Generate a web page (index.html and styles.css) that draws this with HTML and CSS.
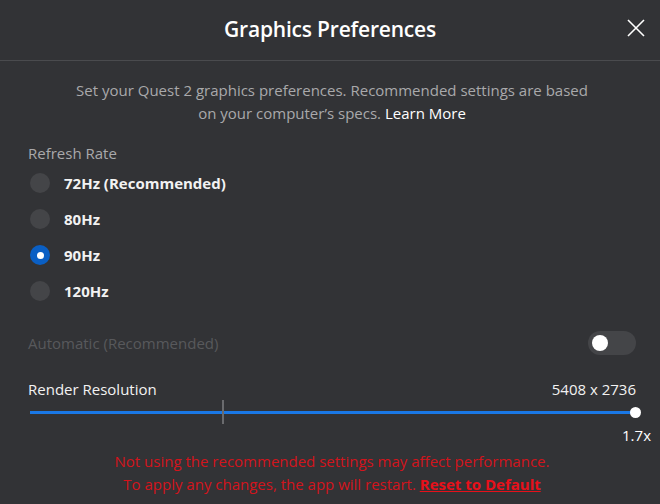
FILE: index.html
```html
<!DOCTYPE html>
<html>
<head>
	<title>Graphics Preferences</title>
	<link rel="stylesheet" href="styles.css">
</head>

<body>
	<div class="dialog">
		<header class="dialog-header">
			<h1>Graphics Preferences</h1>
			<button class="close-btn" aria-label="Close">
				<svg width="18" height="18" viewBox="0 0 18 18">
					<path d="M1 1 L17 17 M17 1 L1 17" stroke="#ffffff" stroke-width="1.6" fill="none"/>
				</svg>
			</button>
		</header>

		<div class="dialog-body">
			<p class="intro">
				Set your Quest 2 graphics preferences. Recommended settings are based<br>
				on your computer’s specs. <a href="#">Learn More</a>
			</p>

			<div class="section-label">Refresh Rate</div>
			<ul class="radio-list">
				<li><span class="radio"></span>72Hz (Recommended)</li>
				<li><span class="radio"></span>80Hz</li>
				<li><span class="radio checked"></span>90Hz</li>
				<li><span class="radio"></span>120Hz</li>
			</ul>

			<div class="toggle-row">
				<span class="toggle-label">Automatic (Recommended)</span>
				<span class="toggle"><span class="knob"></span></span>
			</div>

			<div class="res-row">
				<span>Render Resolution</span>
				<span>5408 x 2736</span>
			</div>
			<div class="slider">
				<div class="track"></div>
				<div class="tick"></div>
				<div class="thumb"></div>
			</div>
			<div class="scale">1.7x</div>

			<p class="warning">
				Not using the recommended settings may affect performance.<br>
				To apply any changes, the app will restart. <a href="#">Reset to Default</a>
			</p>
		</div>
	</div>
</body>

</html>
```

FILE: styles.css
```css
html,
body {
	margin: 0;
	background: #323336;
}

body {
	font-family: "Open Sans", "Noto Sans", sans-serif;
	color: #ffffff;
	width: 660px;
	height: 504px;
	overflow: hidden;
}

.dialog-header {
	height: 60px;
	border-bottom: 1px solid #4a4b4e;
	display: flex;
	align-items: center;
	justify-content: center;
	position: relative;
}

.dialog-header h1 {
	margin: 0;
	font-size: 21px;
	font-weight: 600;
	letter-spacing: -0.2px;
	margin-top: -2px;
}

.close-btn {
	position: absolute;
	right: 15px;
	top: 19px;
	background: none;
	border: none;
	padding: 0;
	width: 18px;
	height: 18px;
	cursor: pointer;
}

.dialog-body {
	padding: 0 24px 0 28px;
}

.intro {
	margin: 18px 0 0;
	text-align: center;
	font-size: 15px;
	line-height: 23px;
	color: #a9a9ab;
}

.intro a {
	color: #ffffff;
	text-decoration: none;
}

.section-label {
	margin-top: 18px;
	font-size: 15px;
	line-height: 20px;
	color: #a9a9ab;
}

.radio-list {
	list-style: none;
	margin: 2px 0 0;
	padding: 0;
}

.radio-list li {
	height: 36px;
	display: flex;
	align-items: center;
	font-size: 15px;
	font-weight: 700;
	color: #f2f2f2;
}

.radio {
	width: 20px;
	height: 20px;
	border-radius: 50%;
	background: #444548;
	margin: 0 14px 0 2px;
	display: flex;
	align-items: center;
	justify-content: center;
}

.radio.checked {
	background: #0a5fc4;
}

.radio.checked::after {
	content: "";
	width: 7px;
	height: 7px;
	border-radius: 50%;
	background: #ffffff;
}

.toggle-row {
	margin-top: 22px;
	display: flex;
	justify-content: space-between;
	align-items: center;
	height: 24px;
}

.toggle-label {
	font-size: 15px;
	color: #58595c;
}

.toggle {
	width: 48px;
	height: 24px;
	border-radius: 12px;
	background: #444548;
	display: flex;
	align-items: center;
	padding-left: 4px;
	box-sizing: border-box;
}

.knob {
	width: 16px;
	height: 16px;
	border-radius: 50%;
	background: #ffffff;
}

.res-row {
	margin-top: 23px;
	display: flex;
	justify-content: space-between;
	font-size: 15px;
	line-height: 22px;
	color: #f2f2f2;
}

.slider {
	position: relative;
	height: 24px;
	margin-left: 2px;
}

.track {
	position: absolute;
	left: 0;
	right: 0;
	top: 11px;
	height: 3px;
	background: #1a78e6;
}

.tick {
	position: absolute;
	left: 192px;
	top: 0;
	width: 2px;
	height: 24px;
	background: #6a6b6e;
}

.thumb {
	position: absolute;
	right: -5px;
	top: 7px;
	width: 11px;
	height: 11px;
	border-radius: 50%;
	background: #ffffff;
}

.scale {
	text-align: right;
	margin: 1px -15px 0 0;
	font-size: 15px;
	line-height: 20px;
}

.warning {
	margin: 5px 0 0;
	text-align: center;
	font-size: 15px;
	line-height: 23px;
	color: #d3141c;
}

.warning a {
	color: #e8101a;
	font-weight: 700;
	text-decoration: underline;
}
```
